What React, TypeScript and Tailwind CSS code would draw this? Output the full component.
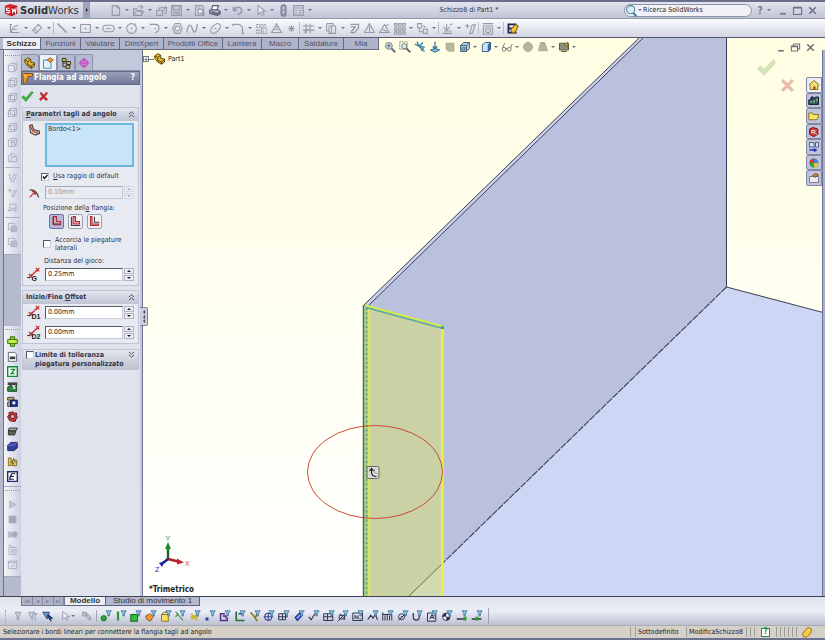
import React, { useState } from "react";
import type { ReactNode } from "react";

function Svg({ children, size = "w-[13px] h-[13px]", color = "text-[#9599a9]" }: { children: ReactNode; size?: string; color?: string }) {
  return (
    <svg viewBox="0 0 16 16" className={`${size} ${color} shrink-0`} fill="none" stroke="currentColor" strokeWidth="1.3" aria-hidden="true">
      {children}
    </svg>
  );
}

/* ---------- glyph drawings, all on a 16 x 16 grid ---------- */

const fileGlyphs: Record<string, ReactNode> = {
  nuovo: <path d="M4 2h6l3 3v9H4zM10 2v3h3" />,
  apri: <path d="M2 14V6h4l1 2h5v6zM2 14l3-5h9l-2 5M8 4c2-3 4-2 5 1M13 2v3h-3" />,
  pubblica: <path d="M2 14V8h7v6zM5 8V5h4M7 4h7v7h-4M9 9l5-6" />,
  salva: (
    <>
      <path d="M2 2h12v12H2z" fill="#c5c8d6" />
      <path d="M4 2v5h8V2M5 14v-4h6v4M9 11v3" />
    </>
  ),
  anteprima: (
    <>
      <path d="M3 2h8l2 2v10H3zM5 5h4" />
      <circle cx="9" cy="9" r="3" fill="#e6e8f0" />
      <path d="M11 11l3 3" strokeWidth="2" />
    </>
  ),
  stampa: (
    <>
      <path d="M4 7l2-5h7l-2 5" fill="#fff" stroke="#555a6e" />
      <path d="M2 8l2-1h8l3 2v3l-3 2-9-2-1-1z" fill="#a8adbd" stroke="#555a6e" />
      <path d="M4 10l8 2 2-2" stroke="#444a5c" />
    </>
  ),
  annulla: <path d="M3 3v5h5M3 8c3-5 9-5 10-1 1 3-2 5-5 6" strokeWidth="1.8" />,
  selezione: <path d="M5 2v11l3-3 2 4 2-1-2-4h4z" fill="#eef0f6" />,
  ricostruisci: (
    <>
      <rect x="5" y="1" width="6" height="14" rx="3" fill="#9da1b1" stroke="#757a8c" />
      <circle cx="8" cy="5" r="1" fill="#eee" stroke="none" />
      <circle cx="8" cy="10" r="1" fill="#eee" stroke="none" />
    </>
  ),
  opzioni: <path d="M2 2h12v12H2zM2 5h12M4 8h2M8 8h4M4 11h2M8 11h4" />,
};

const sketchGlyphs: Record<string, ReactNode> = {
  schizzo: <path d="M2 3h3M3 3v10h11M4 12c1-5 5-8 9-8M6 9h5" />,
  quota: <path d="M2 10l7-7 4 4-7 7zM4 8l4 4M9 3l4 4" />,
  linea: <path d="M2 2l11 11" strokeWidth="1.8" />,
  rettangolo: <path d="M2 3h12v10H2zM8 7v2M7 8h2" />,
  asola: <path d="M5 4h6a4 4 0 010 8H5a4 4 0 010-8zM5 8h6" />,
  cerchio: <path d="M8 2a6 6 0 100 12A6 6 0 008 2zM7 8h2M8 7v2M13 2l-2 2" />,
  arco: <path d="M3 3h6c6 0 6 8 0 10M3 2v2M8 8h2" strokeWidth="1.5" />,
  poligono: <path d="M5 2h6l3 6-3 6H5L2 8zM8 5a3 3 0 100 6 3 3 0 000-6z" />,
  spline: <path d="M1 13C3 0 6 3 8 9s5 4 6-7" strokeWidth="1.6" />,
  ellisse: <path d="M3 13C-1 9 9-1 13 3s-6 14-10 10zM7 8h2" />,
  raccordo: <path d="M2 3h5c4 0 6 3 6 6v5M1 2v3M12 14h3" strokeWidth="1.5" />,
  piano: <path d="M2 3h4v4H2zM8 3h6M2 10h4v4H2zM8 7h6v7H8zM6 5h8M10 7v7" strokeDasharray="2 1" />,
  testo: <path d="M2 13L8 2l6 11zM5 9h6M7 6h3" />,
  punto: <path d="M8 4v8M4 8h8M5 5l6 6M11 5l-6 6" />,
  taglia: <path d="M1 5h14M1 10h14M5 2v12M10 2v12M3 13l4-5" />,
  converti: <path d="M5 5h8v9H5zM2 2h8v3M2 2v9h3M8 5v9" />,
  offset: <path d="M3 3h10v4l-5 6H3M3 6h6l-5 6" strokeWidth="1.5" />,
  specchia: <path d="M8 5v7M2 13L8 2l6 11zM5 13h6" />,
  simmetria: <path d="M2 13L8 3l6 10zM9 5l4-2M6 9l5 3" />,
  ripeti: <path d="M2 2h3v3H2zM7 2h3v3H7zM12 2h3v3h-3zM2 7h3v3H2zM7 7h3v3H7zM12 7h3v3h-3zM2 12h3v3H2zM7 12h3v3H7zM12 12h3v3h-3z" />,
  sposta: <path d="M2 2h5v5H2zM9 9h5v5H9zM4 7v5h5M9 4l3 3" />,
  relazioni: <path d="M2 14h12M4 11h9M7 2v9M3 6l4 4 4-4M11 4l3-2" />,
  ripara: <path d="M4 2v6M1 5h6M7 14l3-10 4-1-4 11z" />,
  snap: <path d="M2 2h13M3 5h11v10H3zM8.500 7a3 3 0 100 6 3 3 0 000-6zM8 10h1" />,
  rapido: (
    <>
      <path d="M13 3H3v10h10M3 8h5" stroke="#20264f" strokeWidth="2.2" />
      <path d="M6 9l6-6 3 2-4 8-3 1z" fill="#f4c63a" stroke="#8a6412" />
    </>
  ),
};

type Entry = string | "|";

/* A name ending in "+" carries a drop-down arrow; "|" is a separator. */
const fileBar: Entry[] = ["nuovo+", "apri+", "pubblica", "salva+", "anteprima", "stampa+", "annulla+", "selezione+", "ricostruisci", "opzioni+"];
const sketchBar: Entry[] = [
  "schizzo+", "quota+", "|", "linea+", "rettangolo+", "asola+", "cerchio+", "arco+", "poligono", "spline+", "ellisse+", "raccordo+",
  "piano", "testo", "punto", "|", "taglia+", "converti+", "offset", "specchia", "simmetria", "ripeti+", "sposta+", "|",
  "relazioni+", "ripara", "|", "snap+", "|", "rapido",
];

function Arrow() {
  return <span className="w-0 h-0 border-x-2 border-x-transparent border-t-2 border-t-[#6d7185]" />;
}

function ToolRow({ entries, glyphs }: { entries: Entry[]; glyphs: Record<string, ReactNode> }) {
  return (
    <div className="flex h-full items-center">
      {entries.map((e, i) => {
        if (e === "|") return <span key={i} className="mr-px h-3 w-px shrink-0 bg-[#b9bccb]" />;
        const drop = e.endsWith("+");
        const name = drop ? e.slice(0, -1) : e;
        return (
          <button key={i} aria-label={name} className="flex shrink-0 items-center">
            <span className="flex w-[15px] justify-center">
              <Svg>{glyphs[name]}</Svg>
            </span>
            {drop && (
              <span className="flex w-2 justify-center">
                <Arrow />
              </span>
            )}
          </button>
        );
      })}
    </div>
  );
}

function PartIcon() {
  return (
    <Svg size="w-3 h-3">
      <path d="M1 4l4-3 4 2v4l5 1v4l-4 3-5-3-4-5z" fill="#e9b93a" stroke="#5a430c" />
      <path d="M1 4l4 2 4-3M5 6v4l5 2 4-3M10 12v3" stroke="#5a430c" />
    </Svg>
  );
}

const cubeBase = "M2 5h9v9H2zM5 2h9v9h-3M2 5l3-3M11 5l3-3M11 14l3-3";
const viewGlyphs: ReactNode[] = [
  <path d={cubeBase} />,
  <><path d={cubeBase} /><path d="M5 2v9h6M5 11l-3 3" /></>,
  <><path d={cubeBase} /><path d="M5 3v8h7" strokeWidth="1.8" /></>,
  <><path d={cubeBase} /><path d="M2 5v9M5 2v9h9" /></>,
  <><path d={cubeBase} /><path d="M5 5v6h6" /></>,
  <><path d={cubeBase} /><path d="M5 8h6M7 5v8" /></>,
  <path d="M2 14V6l4-4h4l4 5v7zM6 2v5h8M5 14c0-5 3-7 6-7" />,
];
const viewGlyphs2: ReactNode[] = [
  <path d="M3 4l3 10h3l5-9-4-1-3 7M3 4h3" />,
  <path d="M4 2v6M1 5h6M7 14l3-8 4-1-4 9z" />,
  <path d="M4 3h9v6H4zM2 12h12M4 10l-2 2 2 2M12 10l2 2-2 2" />,
];
const viewGlyphs3: ReactNode[] = [
  <><path d="M2 2h9v9H2z" /><path d="M6 6h8v8H6z" fill="#bfc3d0" /><path d="M8 8h4v4H8z" /></>,
  <><path d="M2 2h9v9H2z" /><path d="M6 6h8v8H6z" fill="#bfc3d0" /><path d="M8 12l5-5" /></>,
];
const macroGlyphs: ReactNode[] = [
  <><path d="M5 1h6v14H5z" fill="#7bdc22" stroke="#356b10" /><path d="M1 5h14v6H1z" fill="#a5ee3a" stroke="#356b10" /><path d="M5 6h6v4H5z" fill="#d9ee4d" stroke="none" /></>,
  <><path d="M2 2h9l3 3v10H2z" fill="#fff" stroke="#555b70" /><path d="M4 8h8v4H4z" fill="#3b4150" stroke="none" /></>,
  <><path d="M1 1h14v14H1z" fill="#f2fff4" stroke="#138a3a" strokeWidth="2" /><path d="M5 5h6l-5 6h5" stroke="#138a3a" strokeWidth="1.8" /></>,
  <><path d="M1 2h14v4H1z" fill="#444" stroke="none" /><path d="M1 15V9l5-3 3 5 5-5v9z" fill="#2d8a3a" stroke="#153d1b" /><path d="M8 12l3-4 2 3z" fill="#dfe8df" stroke="none" /></>,
  <><path d="M1 2h9v4H1zM1 9h5v6H1z" fill="#c9bd6a" stroke="#333" /><path d="M5 6h10v9H5z" fill="#1c2f9c" stroke="#0c1340" /><path d="M8 8h4v4H8z" fill="#fff" stroke="none" /></>,
  <><path d="M8 1l3 2 3 0 0 4 1 2-2 3-1 3H8l-4-1-2-3-1-3 2-3 0-3h3z" fill="#c43a3a" stroke="#5a1414" /><circle cx="8" cy="8" r="3" fill="#e8b9b9" stroke="#5a1414" /></>,
  <><path d="M3 3h12l-2 4H2z" fill="#a9aea5" stroke="#2b2f2a" /><path d="M2 7h11l-2 6H2z" fill="#5d655a" stroke="#2b2f2a" /></>,
  <><path d="M1 6l5-4h9v8l-5 4H1z" fill="#363e9c" stroke="#1f2566" /><path d="M1 6h9l5-4" stroke="#7c84dd" /></>,
  <><path d="M2 3h4v11H2zM8 6h6v8H8z" fill="#f2d43a" stroke="#7a661a" /><path d="M5 8l6 4M9 3l3 7" stroke="#555" /></>,
  <><path d="M1 1h14v14H1z" fill="#fff" stroke="#1d2a6b" strokeWidth="2" /><path d="M12 4H7L5 8h5M5 8l-1 4h6" stroke="#14193f" strokeWidth="1.8" /></>,
];
const playGlyphs: ReactNode[] = [
  <path d="M4 3l9 5-9 5z" fill="#c3c7d3" />,
  <path d="M3 3h10v10H3z" fill="#a3a7b6" />,
  <><path d="M2 4h1v8H2zM5 4h1v8H5z" /><circle cx="11" cy="8" r="4" fill="#a3a7b6" /></>,
  <path d="M3 5h10v10H3zM2 2h4l2 3M7 8h3v4H7z" />,
  <path d="M2 3h12v11H2zM2 5h12M5 12l6-5" />,
];

function Grip() {
  return <div className="mx-px h-0 border-t border-dotted border-[#8e92a6]" />;
}

function VList({ items }: { items: ReactNode[] }) {
  return (
    <>
      {items.map((g, i) => (
        <button key={i} aria-label={`Strumento ${i + 1}`} className="flex h-[15px] w-full shrink-0 items-center justify-center">
          <Svg size="w-[11px] h-[11px]" color="text-[#a9adbd]">{g}</Svg>
        </button>
      ))}
    </>
  );
}

function SideBar() {
  const box = "flex flex-col border-b border-[#a7abbd] bg-linear-to-r from-[#f4f5fa] to-[#ccd0e0]";
  return (
    <aside className="flex w-[17px] shrink-0 flex-col bg-[#b5bacd]">
      <div className={`${box} pt-[5px] pb-1`}>
        <Grip />
        <div className="pt-1"><VList items={viewGlyphs} /></div>
        <div className="mx-px my-[2px] h-px bg-[#b0b4c4]" />
        <VList items={viewGlyphs2} />
        <div className="mx-px my-[2px] h-px bg-[#b0b4c4]" />
        <VList items={viewGlyphs3} />
      </div>
      <div className="min-h-0 grow basis-0" />
      <div className={`${box} pt-[3px] pb-[2px]`}>
        <Grip />
        <div className="pt-1"><VList items={macroGlyphs} /></div>
      </div>
      <div className={`${box} pt-[3px] pb-1`}>
        <Grip />
        <div className="pt-[6px]"><VList items={playGlyphs} /></div>
      </div>
      <div className="h-[19px] shrink-0" />
    </aside>
  );
}

/* ---------- property manager ---------- */

function Chevrons({ down = false }: { down?: boolean }) {
  return (
    <svg viewBox="0 0 8 8" className="h-[7px] w-[7px] shrink-0" fill="none" stroke="#4c5168" strokeWidth="1.1" aria-hidden="true">
      <path d={down ? "M1 1l3 2.500L7 1M1 4.500L4 7l3-2.500" : "M1 3.500L4 1l3 2.500M1 7l3-2.500L7 7"} />
    </svg>
  );
}

function Spin({ id, label, value, disabled = false }: { id: string; label: string; value: string; disabled?: boolean }) {
  const [v, setV] = useState(value);
  return (
    <div className="flex h-[13px] grow items-stretch">
      <input
        id={id}
        aria-label={label}
        disabled={disabled}
        value={v}
        onChange={(e) => setV(e.target.value)}
        className={`w-0 grow border border-r-[#c8cbd6] border-b-[#c8cbd6] px-[2px] text-[7px] leading-[11px] outline-none ${disabled ? "border-t-[#a5a9b8] border-l-[#a5a9b8] bg-[#e9ebf2] text-[#9397a6]" : "border-t-[#555a6c] border-l-[#555a6c] bg-white text-[#222]"}`}
      />
      <div className={`ml-px flex w-[10px] flex-col ${disabled ? "opacity-30" : ""}`}>
        <button disabled={disabled} aria-label={`${label} più`} className="flex h-[6px] items-center justify-center border border-[#b1b4c2] bg-[#eceef4]">
          <span className="h-0 w-0 border-x-2 border-b-2 border-x-transparent border-b-[#222]" />
        </button>
        <button disabled={disabled} aria-label={`${label} meno`} className="mt-px flex h-[6px] items-center justify-center border border-[#b1b4c2] bg-[#eceef4]">
          <span className="h-0 w-0 border-x-2 border-t-2 border-x-transparent border-t-[#222]" />
        </button>
      </div>
    </div>
  );
}

function Tick({ id, checked = false }: { id: string; checked?: boolean }) {
  const [on, setOn] = useState(checked);
  return (
    <span className="relative h-2 w-2 shrink-0">
      <input
        id={id}
        type="checkbox"
        checked={on}
        onChange={() => setOn(!on)}
        className="block h-2 w-2 appearance-none border border-t-[#555a6c] border-l-[#555a6c] border-r-[#c8cbd6] border-b-[#c8cbd6] bg-white"
      />
      {on && (
        <svg viewBox="0 0 8 8" className="pointer-events-none absolute inset-0 h-2 w-2" fill="none" stroke="#111" strokeWidth="1.4" aria-hidden="true">
          <path d="M2 3.500L3.500 5.500 6.500 2" />
        </svg>
      )}
    </span>
  );
}

const groupHead = "flex items-center justify-between bg-linear-to-b from-[#e4e6ef] to-[#bfc3d2] px-[3px] text-[7px] font-bold text-[#2f3448]";
const groupBox = "mx-px border border-[#c0c4d2] bg-[#e8eaf1]";
const iconCol = "flex w-[22px] shrink-0 justify-center";

function GapIcon({ tag }: { tag: string }) {
  return (
    <svg viewBox="0 0 16 16" className="h-[14px] w-[14px] overflow-visible" fill="none" aria-hidden="true">
      <path d="M5 10L12 3" stroke="#c52b2b" strokeWidth="1.6" />
      <path d="M10 1l4 4M11 5l3-4M2 8l5 5M2 13l4-5" stroke="#c52b2b" strokeWidth="1.3" />
      <path d="M0 12h4" stroke="#333" />
      <text x="5" y="16" fontSize="8" fontWeight="bold" fill="#222" fontFamily="Liberation Sans, sans-serif">{tag}</text>
    </svg>
  );
}

const positions = [
  { id: "interna", label: "Materiale interno", d: "M4 2v9h9", fill: "M4 2h4v6h5v4H4z" },
  { id: "esterna", label: "Materiale esterno", d: "M3 2v11h11", fill: "M5 2h3v6h5v3H5z" },
  { id: "piega", label: "Piega all'esterno", d: "M8 2v7h6", fill: "M3 2h2v9h8v2H3z" },
];

function PropertyPanel() {
  const [pos, setPos] = useState("interna");
  const tabs: { n: string; g: ReactNode }[] = [
    { n: "Albero", g: <PartIcon /> },
    { n: "Proprietà", g: <Svg size="w-3 h-3"><path d="M2 4h10v11H2z" fill="#dff2fa" stroke="#3b8fb5" /><path d="M7 4l4-3 4 3-4 3z" fill="#f2a53a" stroke="#8d5512" /></Svg> },
    { n: "Configurazioni", g: <Svg size="w-3 h-3"><path d="M3 2h5v4H3zM9 6h5v4H9zM8 11h5v4H8z" fill="#d8c34a" stroke="#333" /><path d="M4 6v7h4M4 8h5" stroke="#333" /></Svg> },
    { n: "DimXpert", g: <Svg size="w-3 h-3"><circle cx="8" cy="8" r="4.500" stroke="#c94bc6" strokeWidth="2" /><path d="M8 1v14M1 8h14" stroke="#c94bc6" strokeWidth="1.800" /></Svg> },
  ];
  return (
    <section className="relative flex w-[119px] shrink-0 flex-col bg-[#dfe3ed] text-[7px] text-[#2c3042]">
      <div className="flex h-[21px] items-end border-b border-[#8d92aa] bg-[#c3c8da] pt-1">
        {tabs.map((t, i) => (
          <button key={t.n} aria-label={t.n} className={`flex h-4 w-[18px] items-center justify-center rounded-t-xs border border-b-0 border-[#8d92aa] ${i === 1 ? "bg-[#eef0f7]" : "bg-[#b5bacf]"}`}>
            {t.g}
          </button>
        ))}
      </div>
      <h1 className="flex h-[14px] items-center border border-[#646a88] bg-linear-to-b from-[#9ba0b8] to-[#71779a] text-[8px] font-bold text-white">
        <Svg size="w-3 h-3"><path d="M1 2h13v4H8L5 15H2z" fill="#f09a2a" stroke="#8c520b" /><path d="M2 3l4 4" stroke="#fbe3b8" /></Svg>
        <span className="grow">Flangia ad angolo</span>
        <button aria-label="Guida" className="px-1">?</button>
      </h1>
      <div className="flex h-[22px] items-center gap-1">
        <button aria-label="OK"><Svg><path d="M1 9l2-2 3 3 7-8 2 1-9 11z" fill="#45b83f" stroke="#1d7d22" strokeWidth="0.800" /></Svg></button>
        <button aria-label="Annulla"><Svg size="w-[11px] h-[11px]"><path d="M3 3l2-1 3 4 4-4 2 1-4 5 4 4-2 2-4-4-4 4-2-2 4-4z" fill="#d3232c" stroke="#8d1218" strokeWidth="0.800" /></Svg></button>
      </div>

      <div className={groupBox}>
        <h2 className={`${groupHead} h-[13px]`}><span><u>P</u>arametri tagli ad angolo</span><Chevrons /></h2>
        <div className="flex flex-col pr-1 pb-1">
          <div className="flex pt-[2px]">
            <span className={iconCol}><Svg><path d="M2 3l3-1 2 6 7 2v3l-5 2-6-3z" fill="#cfc4b4" stroke="#4d3b33" /><path d="M3 4l3 6 7 3" stroke="#b8332d" /></Svg></span>
            <ul aria-label="Bordi selezionati" className="h-[44px] grow border-2 border-[#6db7e3] bg-[#c8e5f7] px-px leading-[8px]"><li>Bordo&lt;1&gt;</li></ul>
          </div>
          <div className="flex h-[19px] items-center gap-1 pl-[18px]">
            <Tick id="raggio" checked />
            <label htmlFor="raggio"><u>U</u>sa raggio di default</label>
          </div>
          <div className="flex items-center">
            <span className={iconCol}><Svg><path d="M2 5c6-1 9 2 11 9" stroke="#444" strokeWidth="1.500" /><path d="M2 14l7-7M9 7v4M9 7H5" stroke="#c52b2b" strokeWidth="1.500" /></Svg></span>
            <Spin id="raggio-val" label="Raggio" value="0.10mm" disabled />
          </div>
          <fieldset>
            <legend className="pt-[4px] pl-[20px] leading-[11px]">Posizione dell<u>a</u> flangia:</legend>
            <div className="flex h-[15px] gap-1 pl-[26px]">
              {positions.map((p) => (
                <label key={p.id} className={`flex h-[15px] w-[15px] items-center justify-center rounded-xs border ${pos === p.id ? "border-[#6d6fa5] bg-[#b8b6de]" : "border-[#9a9eae] bg-[#f3f3f6]"}`}>
                  <input type="radio" name="posizione" aria-label={p.label} checked={pos === p.id} onChange={() => setPos(p.id)} className="sr-only" />
                  <Svg size="w-[13px] h-[13px]">
                    <path d={p.fill} fill="#dfa3a8" stroke="#b02a33" />
                    <path d={p.d} stroke="#3c3c46" />
                  </Svg>
                </label>
              ))}
            </div>
          </fieldset>
          <div className="flex items-center gap-1 pt-[7px] pb-[3px] pl-[20px]">
            <Tick id="accorcia" />
            <label htmlFor="accorcia" className="leading-[8px]">Accorcia le piegature laterali</label>
          </div>
          <label htmlFor="gioco" className="pl-[21px] leading-[12px]">Distanza del gioco:</label>
          <div className="flex items-center">
            <span className={iconCol}><GapIcon tag="G" /></span>
            <Spin id="gioco" label="Distanza del gioco" value="0.25mm" />
          </div>
        </div>
      </div>

      <div className={`${groupBox} mt-1`}>
        <h2 className={`${groupHead} h-[13px]`}><span>Inizio/Fine <u>O</u>ffset</span><Chevrons /></h2>
        <div className="flex flex-col gap-[6px] pt-px pr-1 pb-1">
          <div className="flex items-center"><span className={iconCol}><GapIcon tag="D1" /></span><Spin id="d1" label="Offset iniziale" value="0.00mm" /></div>
          <div className="flex items-center"><span className={iconCol}><GapIcon tag="D2" /></span><Spin id="d2" label="Offset finale" value="0.00mm" /></div>
        </div>
      </div>

      <div className={`${groupBox} mt-[5px]`}>
        <div className={`${groupHead} h-[19px] items-start pt-px`}>
          <Tick id="limite" />
          <label htmlFor="limite" className="grow pl-px leading-[9px]">Limite di tolleranza<br />piegatura personalizzato</label>
          <Chevrons down />
        </div>
      </div>
    </section>
  );
}

/* ---------- model view ---------- */

function Scene() {
  return (
    <svg viewBox="0 38 825 558" preserveAspectRatio="xMinYMin slice" className="absolute inset-0 h-full w-full" aria-hidden="true">
      <defs>
        <linearGradient id="sky" x1="0" y1="0" x2="0" y2="1">
          <stop offset="0" stopColor="#fffde2" />
          <stop offset="0.500" stopColor="#fffff2" />
          <stop offset="1" stopColor="#ffffff" />
        </linearGradient>
      </defs>
      <rect x="0" y="38" width="825" height="558" fill="url(#sky)" />
      <path d="M639 38H727V287L409 596H364V305Z" fill="#b9c1df" />
      <path d="M727 287L825 313V596H409Z" fill="#cdd6f4" />
      <path d="M639 38L364 305L368 306L643 38Z" fill="#ccd2ea" />
      <path d="M639 38L364 305M643 38L368 306" stroke="#3d4058" strokeWidth="1" />
      <path d="M726.500 38V287L825 313" stroke="#3b3f50" strokeWidth="1" fill="none" />
      <path d="M726.500 287L409 596" stroke="#3a3e52" strokeWidth="1.100" strokeDasharray="7 1" />
      <path d="M364 305L443 328V596H364Z" fill="#c9d1a5" />
      <path d="M443 563V596H409Z" fill="#d3dab1" />
      <path d="M443 563L409 596" stroke="#6a6f52" />
      <path d="M363.500 305V596" stroke="#4a6b50" strokeWidth="1.500" />
      <path d="M366.500 307V596" stroke="#a7dc62" strokeWidth="3" />
      <path d="M366.500 308V596" stroke="#4a9c8c" strokeWidth="1.400" strokeDasharray="2 2.500" />
      <path d="M369 308V596" stroke="#e9ee36" strokeWidth="1.300" />
      <path d="M442.500 328V596" stroke="#eef03a" strokeWidth="2.500" />
      <path d="M366 305.500L443 326.500" stroke="#d3ea4a" strokeWidth="2" />
      <path d="M366 307.500L443 328.500" stroke="#58a8a0" strokeWidth="1.600" />
      <path d="M441 326h3v3h-3z" fill="#4d9f95" />
      <ellipse cx="375" cy="472" rx="67.500" ry="46.500" fill="none" stroke="#cf4a35" strokeWidth="1" />
      <rect x="367" y="466.500" width="12" height="12" rx="1.500" fill="#d9dbd6" stroke="#63666a" />
      <path d="M371.500 469v3c0 3 1.500 4.500 5 4.500M369.500 471l2-2.500 2 2.500" fill="none" stroke="#222" strokeWidth="1.200" />
      <path d="M374.500 469v2c0 2 1 2.500 3 2.500" fill="none" stroke="#8a8d8a" strokeWidth="0.800" />
      {/* axis triad */}
      <path d="M168 559V548" stroke="#166b22" strokeWidth="2.400" />
      <path d="M165 549l3-7 3 7z" fill="#1a8a2c" />
      <path d="M168 559l10 2.500" stroke="#b01f24" strokeWidth="2.400" />
      <path d="M177 558.500l7 4-7 2z" fill="#c4252b" />
      <path d="M168 559l-5 4" stroke="#1a1d8a" strokeWidth="2.400" />
      <path d="M165 561l-6 2 3 4z" fill="#1b1fa5" />
      <g fontSize="7" fontFamily="Liberation Sans, sans-serif">
        <text x="165.500" y="541" fill="#2c8f3c">Y</text>
        <text x="185" y="566" fill="#c4454a">X</text>
        <text x="155" y="572" fill="#20248f">Z</text>
      </g>
    </svg>
  );
}

const hud: { d: ReactNode; drop?: boolean }[] = [
  { d: <><circle cx="6.500" cy="6.500" r="4.500" fill="#dbe8ee" stroke="#6e7c84" /><path d="M10 10l5 5" stroke="#5d6a72" strokeWidth="2.400" /><path d="M4 6.500h5M6.500 4v5" stroke="#50606a" /></> },
  { d: <><path d="M1 1h10v10H1z" stroke="#888" strokeDasharray="2 1" /><circle cx="7" cy="7" r="3.500" fill="#dbe8ee" stroke="#6e7c84" /><path d="M10 10l5 5" stroke="#5d6a72" strokeWidth="2.400" /></> },
  { d: <><path d="M1 4l6 3 5-5M4 1l3 6 7 7" stroke="#2f7ba5" strokeWidth="1.800" /><path d="M9 7l5 1-4 5z" fill="#79bfe0" stroke="#2f7ba5" /></> },
  { d: <><path d="M8 1v10M5 7l3 4 3-4" stroke="#25688f" strokeWidth="1.600" /><path d="M2 12l6-2 6 2-6 3z" fill="#8cc4de" stroke="#25688f" /></> },
  { d: <path d="M3 3h10v11l-3-1-3 1-4-3z" fill="#b7b8a0" stroke="#a5a68f" /> },
  { d: <><path d="M2 6l4-4h8v8l-4 4H2z" fill="#a9cbe0" stroke="#4b6577" /><path d="M2 6h8v8M10 6l4-4M4 9h4v3H4z" stroke="#4b6577" /></>, drop: true },
  { d: <><path d="M3 5l4-3h7v9l-3 3H3z" fill="#c9e5f7" stroke="#36618e" /><path d="M11 5l3-3v9l-3 3z" fill="#2f6ec4" stroke="#36618e" /></>, drop: true },
  { d: <><circle cx="4" cy="11" r="2.500" stroke="#777" /><circle cx="11" cy="11" r="2.500" stroke="#777" /><path d="M6 10h3M2 9l3-6M13 9l2-5" stroke="#777" /></>, drop: true },
  { d: <circle cx="8" cy="8" r="6" fill="#b3b59a" stroke="#a7a88e" /> },
  { d: <path d="M5 2h5l4 11H2z" fill="#b3b59a" stroke="#a7a88e" />, drop: true },
  { d: <><path d="M2 3h12v9H2z" fill="#8b8f80" stroke="#55584d" /><path d="M4 14h8M8 5l5-3v6z" fill="#e3b93a" stroke="#776019" /></>, drop: true },
];

const taskTabs: ReactNode[] = [
  <><path d="M1 8l7-6 7 6M3 8v6h10V8" fill="#f3df72" stroke="#8a6f1a" /><path d="M7 10h3v4H7z" fill="#8d4d1a" stroke="none" /></>,
  <><path d="M1 14V8l3-1v-3h3v3l3-3h4v10z" fill="#28566d" stroke="#15222b" /><path d="M4 9v3M8 8v4M12 6v4" stroke="#d6dd55" /></>,
  <path d="M1 13V4h5l1 2h7v2l-2 5z" fill="#f4df70" stroke="#927719" />,
  <><path d="M2 4l5-2 6 2v8l-6 2-5-3z" fill="#d13b3b" stroke="#7a1616" /><path d="M5 6h4v3H5zM10 10l4 4" stroke="#eee" /></>,
  <><path d="M2 2h6v6H2zM10 2h4v6h-4z" fill="#dce6f5" stroke="#4a5a80" /><path d="M2 12h8M8 10l3 2-3 2" stroke="#2233bb" strokeWidth="1.800" /></>,
  <><circle cx="8" cy="8" r="6" fill="#3c82d6" stroke="none" /><path d="M8 8V2a6 6 0 00-6 6z" fill="#d33b2e" stroke="none" /><path d="M8 8H2a6 6 0 006 6z" fill="#3ba33b" stroke="none" /><path d="M8 8h6a6 6 0 01-6 6z" fill="#e9c33b" stroke="none" /></>,
  <><path d="M2 6h12v8H2z" fill="#e9eaf0" stroke="#7b7f90" /><path d="M6 5l4-3 4 2-4 3z" fill="#c98e4a" stroke="#6d4a1c" /></>,
];

function WindowKeys({ restore = false }: { restore?: boolean }) {
  return (
    <div className="flex items-center gap-[2px]">
      <button aria-label="Riduci"><Svg color="text-[#6e7183]"><path d="M5 12h7" strokeWidth="2" /></Svg></button>
      <button aria-label="Ingrandisci">
        <Svg size={restore ? "w-[11px] h-[11px] mx-px" : "w-[13px] h-[13px]"} color="text-[#6e7183]">{restore ? <path d="M5 3h9v7h-3M5 3v3M2 6h9v7H2zM2 7h9" strokeWidth="1.600" /> : <path d="M3 4h10v9H3zM3 5h10" />}</Svg>
      </button>
      <button aria-label="Chiudi"><Svg color="text-[#6e7183]"><path d="M4 4l8 8M12 4l-8 8" strokeWidth="2" /></Svg></button>
    </div>
  );
}

function Viewport() {
  return (
    <main className="relative flex min-w-0 grow flex-col justify-between">
      <div className="flex h-[18px] items-center text-[7px] text-[#222]">
        <button aria-label="Espandi" className="flex h-[6px] w-[6px] items-center justify-center border border-[#777] bg-white text-[6px] leading-none">+</button>
        <span className="h-px w-[5px] bg-[#777]" />
        <PartIcon />
        <span className="pl-[2px]">Part1</span>
      </div>
      <p className="pb-px pl-[6px] text-[8px] leading-[10px] font-bold text-[#222]">*Trimetrico</p>
    </main>
  );
}

/* ---------- selection filter bar ---------- */

const N = "#2b3350";
const filterGlyphs: ReactNode[] = [
  <circle cx="5" cy="11" r="3.500" fill="#2fae3e" stroke="#176323" />,
  <path d="M4 2v12" stroke="#23a035" strokeWidth="3" />,
  <path d="M1 6h9v9H1z" fill="#2fc03c" stroke="#176323" />,
  <path d="M1 8l6-3 4 4-4 6-5-3z" fill="#ef9a32" stroke="#9c5510" />,
  <path d="M2 6h9v9H2zM2 6l3-3h6" fill="#f6de62" stroke="#94741a" />,
  <path d="M2 2l10 12M2 9l4-4" stroke="#3a8a44" strokeWidth="1.500" />,
  <path d="M3 5l8 9M3 13l8-8M2 9h10" stroke="#c6b51f" strokeWidth="2" />,
  <path d="M2 10h4v4H2z" fill="#27429e" stroke="none" />,
  <path d="M8 5H2v9h9v-4M5 8h4v3" stroke="#5a2d85" strokeWidth="2" />,
  <><path d="M3 2v12h11" stroke="#23702f" strokeWidth="2.200" /><path d="M6 5h6" stroke="#27429e" strokeWidth="2" /></>,
  <path d="M2 3l6 7 3 5M8 10l4-6" stroke="#8d7d16" strokeWidth="2.200" />,
  <><circle cx="7" cy="9" r="5" stroke={N} /><path d="M1 9h12M7 4v10" stroke="#3248a5" strokeWidth="1.500" /></>,
  <path d="M1 5h9v8H1zM1 9h12M6 5v8" stroke={N} />,
  <path d="M3 10l6-6 3 3-6 7z" fill="#7fa6ee" stroke="#1e2e9a" strokeWidth="1.800" />,
  <path d="M1 9l3 4 6-9" stroke={N} strokeWidth="1.500" />,
  <path d="M1 5h12v9H1zM1 9h12M6 5v9" stroke={N} />,
  <path d="M3 7h7v5H3zM1 15l11-11M4 5l7 8" stroke={N} />,
  <path d="M1 4h13v10H1zM4 12V7l4 5V7M10 12h2" stroke={N} />,
  <path d="M1 13l4-6 3 4 3-5 3 7" stroke={N} strokeWidth="1.500" />,
  <path d="M1 3v11M4 7v7M7 5v9M10 8v6M13 6v8M1 6h12" stroke={N} />,
  <><circle cx="6" cy="9" r="4" stroke={N} /><path d="M2 14l9-9M5 9h3" stroke={N} /></>,
  <path d="M3 4v5c0 6 8 6 8 0V4" stroke={N} strokeWidth="1.600" />,
  <path d="M2 4h11v11H2zM5 12l3-6 3 6M6 10h4" stroke={N} />,
  <><circle cx="7" cy="9" r="5" fill="#fff" stroke={N} /><path d="M7 9V4a5 5 0 00-5 5zM7 9h5a5 5 0 01-5 5z" fill={N} stroke="none" /></>,
  <><path d="M1 12h12" stroke="#222" strokeWidth="1.800" /><path d="M10 9h4v5h-4z" fill="#2b9b39" stroke="none" /></>,
  <><path d="M1 12h13" stroke="#222" strokeWidth="1.800" /><path d="M6 9h4v5H6z" fill="#2b9b39" stroke="none" /></>,
];

function FilterBar() {
  const grey: ReactNode[] = [
    <path d="M4 3h8L9 8v5H7V8z" fill="#cfd2dd" />,
    <path d="M2 3h8L7 8v5L2 4M8 5h5l-3 4 2 5" fill="#cfd2dd" />,
    <><path d="M1 3h9L7 8v4L1 3" fill="#6f9bc9" stroke="#27507f" /><path d="M8 6l6 5h-3l1 4-4-6z" fill="#224a94" stroke="#142c5c" /></>,
  ];
  return (
    <div className="flex h-[19px] items-center pl-[5px]">
      <span className="mr-1 h-3 border-l border-dotted border-[#9296aa]" />
      {grey.map((g, i) => (
        <button key={i} aria-label={`Filtro ${i + 1}`} className="flex w-[15px] justify-center"><Svg size="w-3 h-3">{g}</Svg></button>
      ))}
      <button aria-label="Selezione" className="flex w-6 items-center justify-center"><Svg size="w-3 h-3">{fileGlyphs.selezione}</Svg><Arrow /></button>
      <button aria-label="Inverti selezione" className="flex w-[15px] justify-center"><Svg size="w-3 h-3"><path d="M2 3h5v5H2zM7 4l7 7-3 0 1 3-5-5z" fill="#c1c4d0" /></Svg></button>
      <span className="mx-[2px] h-3 w-px bg-[#9ea2b4]" />
      <div className="flex w-[385px] items-center">
        {filterGlyphs.map((g, i) => (
          <button key={i} aria-label={`Filtro di selezione ${i + 1}`} className="flex min-w-0 grow basis-0 justify-center">
            <Svg size="w-3 h-3">
              {g}
              <path d="M8 1h7l-2.500 4v3h-2V5z" fill="#8fc0e0" stroke="#2c5f8a" strokeWidth="0.900" />
            </Svg>
          </button>
        ))}
      </div>
      <span className="ml-1 h-4 w-px bg-[#9ea2b4]" />
    </div>
  );
}

const commandTabs = [
  { t: "Schizzo", w: "w-[38px]" },
  { t: "Funzioni", w: "w-[40px]" },
  { t: "Valutare", w: "w-[39px]" },
  { t: "DimXpert", w: "w-[44px]" },
  { t: "Prodotti Office", w: "w-[59px]" },
  { t: "Lamiera", w: "w-[39px]" },
  { t: "Macro", w: "w-[37px]" },
  { t: "Saldature", w: "w-[45px]" },
  { t: "Mia", w: "w-[35px]" },
];

function Ribs() {
  return (
    <span className="flex gap-[3px]">
      <i className="h-[10px] w-px bg-[#9c9b98]" />
      <i className="h-[10px] w-px bg-[#9c9b98]" />
      <i className="h-[10px] w-px bg-[#9c9b98]" />
    </span>
  );
}

export default function App() {
  const [tab, setTab] = useState("Schizzo");
  const [query, setQuery] = useState("Ricerca SolidWorks");
  return (
    <div className="flex h-screen flex-col overflow-hidden bg-[#dfe2ec] font-['DejaVu_Sans_Condensed','DejaVu_Sans',sans-serif]">
      <header className="flex h-[19px] shrink-0 items-center border-t-2 border-b border-t-[#6b6f8c] border-b-[#9195ad] bg-linear-to-b from-[#e2e4ee] to-[#c0c4d7]">
        <div className="flex h-full w-[83px] shrink-0 items-center gap-[2px] pl-1 text-[10px] text-[#333]">
          <svg viewBox="0 0 16 16" className="h-[14px] w-[14px] shrink-0" aria-hidden="true">
            <path d="M1 3l6-2 8 2v9l-7 3-7-3z" fill="#d5242c" />
            <path d="M8 5l7-2v9l-7 3z" fill="#a3141c" />
            <path d="M6 6H3v2.500h3V11H3M9 6l1 5 1.500-4L13 11l1-6" fill="none" stroke="#fff" strokeWidth="1.200" />
          </svg>
          <span className="font-['DejaVu_Sans',sans-serif]"><b>Solid</b>Works</span>
        </div>
        <button aria-label="Menu" className="mr-[18px] flex h-full w-[7px] items-center justify-center bg-[#9da2bd]">
          <span className="h-0 w-0 border-y-2 border-l-2 border-y-transparent border-l-[#222]" />
        </button>
        <ToolRow entries={fileBar} glyphs={fileGlyphs} />
        <span className="grow text-center text-[7px] text-[#333]">Schizzo8 di Part1 *</span>
        <div className="flex h-[13px] w-[128px] shrink-0 items-center rounded-full border border-[#8e93aa] bg-[#f1f2f8]">
          <Svg size="w-[13px] h-[13px]"><circle cx="7" cy="7" r="5" fill="#d3ecf6" stroke="#557f99" /><path d="M10 11l4 4" stroke="#3c7fa8" strokeWidth="2.600" /></Svg>
          <Arrow />
          <input aria-label="Ricerca" value={query} onChange={(e) => setQuery(e.target.value)} className="w-0 grow bg-transparent pl-px text-[7px] text-[#222] outline-none" />
        </div>
        <button aria-label="Guida" className="flex w-6 shrink-0 items-center justify-center gap-1 text-[10px] font-bold text-[#77798c]">?<Arrow /></button>
        <div className="pr-[6px]"><WindowKeys /></div>
      </header>

      <div className="h-[19px] shrink-0 border-b border-[#55596f] bg-linear-to-b from-[#fbfbfe] to-[#d3d6e3] pl-[7px]">
        <ToolRow entries={sketchBar} glyphs={sketchGlyphs} />
      </div>

      <div className="relative flex min-h-0 grow flex-col">
        <Scene />
        <div className="relative flex shrink-0 items-start">
          <nav className="flex h-3 border-b border-[#666b85] bg-[#b5bace] pl-[3px] font-['Liberation_Sans',Arial,sans-serif] text-[8px]">
            {commandTabs.map((c) => (
              <button
                key={c.t}
                onClick={() => setTab(c.t)}
                className={`${c.w} border-r border-[#666b85] text-center leading-[11px] whitespace-nowrap ${tab === c.t ? "bg-[#eef0f7] font-bold text-[#333]" : "bg-[#b0b4ca] text-[#4f5367]"}`}
              >
                {c.t}
              </button>
            ))}
          </nav>
          <div className="flex h-[18px] items-center pl-[3px]">
            {hud.map((h, i) => (
              <button key={i} aria-label={`Vista ${i + 1}`} className="flex items-center">
                <span className="flex w-[15px] justify-center"><Svg size="w-3 h-3">{h.d}</Svg></span>
                {h.drop && <span className="flex w-[6px] justify-center"><Arrow /></span>}
              </button>
            ))}
          </div>
          <div className="flex grow justify-end pt-[3px] pr-2"><WindowKeys restore /></div>
        </div>

        <div className="relative -mt-[6px] flex min-h-0 grow items-stretch">
          <div className="w-1 shrink-0 border-r border-[#6e7390] bg-[#b5bacd]" />
          <SideBar />
          <PropertyPanel />
          <div className="relative w-[3px] shrink-0 border-r border-[#6d7290] bg-[#c3c7d8]">
            <button aria-label="Comprimi pannello" className="absolute top-[257px] left-0 flex h-[19px] w-2 flex-col items-center justify-between rounded-r-xs border border-l-0 border-[#7b809c] bg-[#c9cddd] py-[2px]">
              <i className="h-0 w-0 border-y-2 border-r-2 border-y-transparent border-r-[#444]" />
              <i className="h-0 w-0 border-y-2 border-r-2 border-y-transparent border-r-[#444]" />
              <i className="h-0 w-0 border-y-2 border-r-2 border-y-transparent border-r-[#444]" />
            </button>
          </div>
          <Viewport />
          <div className="flex flex-col items-end">
            <div className="flex items-start pr-[26px]">
              <button aria-label="Conferma schizzo" className="pt-2 pr-[3px] opacity-30"><Svg size="w-[19px] h-[19px]"><path d="M1 9l2-2 3 3 8-8 1 2-9 10z" fill="#7ab35f" stroke="#6ba04f" /></Svg></button>
              <button aria-label="Annulla schizzo" className="pt-[27px] opacity-40"><Svg size="w-[17px] h-[17px]"><path d="M3 3l10 10M13 3L3 13" stroke="#c55a55" strokeWidth="3" /></Svg></button>
            </div>
            <div className="-mt-[17px] flex h-[109px] flex-col">
              {taskTabs.map((g, i) => (
                <button key={i} aria-label={`Riquadro attività ${i + 1}`} className={`flex w-4 grow basis-0 items-center justify-center rounded-l-xs border border-[#8287a5] ${i === 0 ? "bg-[#eceef6]" : "bg-[#bfc4da]"}`}>
                  <Svg size="w-3 h-3">{g}</Svg>
                </button>
              ))}
            </div>
          </div>
          <div className="w-[3px] shrink-0 border-l border-[#6d7290] bg-[#aab0c9]" />
        </div>
      </div>

      <footer className="shrink-0 border-t border-[#3f4358]">
        <div className="bg-linear-to-b from-[#dfe2ec] via-[#eceef7] to-[#bcc0d1]">
          <div className="flex h-[9px] items-stretch pl-[21px] font-['Liberation_Sans',Arial,sans-serif] text-[8px] leading-[8px]">
            <div className="flex w-[44px] border border-t-0 border-[#777c96] bg-[#aeb3c8]">
              {["|◂", "◂", "▸", "▸|"].map((s) => (
                <button key={s} className="flex-1 border-r border-[#8589a2] text-[6px] leading-[8px] text-[#777c96]">{s}</button>
              ))}
            </div>
            <button className="w-[41px] border-r border-b border-[#5e6380] bg-[#eceef6] font-bold whitespace-nowrap text-[#333]">Modello</button>
            <button className="w-[94px] border-r border-b border-[#5e6380] bg-[#b5b9cd] whitespace-nowrap text-[#333]">Studio di movimento 1</button>
          </div>
          <FilterBar />
        </div>
        <div className="flex h-[15px] items-center border-t border-b-2 border-t-[#a9abb3] border-b-[#6d7290] bg-[#d5d1c8] pr-1 pl-[3px] text-[7px] text-[#222]">
          <span className="grow">Selezionare i bordi lineari per connettere la flangia tagli ad angolo</span>
          <span className="mr-1 h-[10px] w-px bg-[#9c9b98]" />
          <span className="w-[51px] border-l border-[#9c9b98] pl-[2px]">Sottodefinito</span>
          <span className="w-[60px] border-l border-[#9c9b98] pl-[2px]">ModificaSchizzo8</span>
          <Ribs />
          <span className="mx-[6px] flex h-[9px] w-[9px] items-center justify-center border border-[#1c8d4a] bg-white text-[8px] leading-none font-bold text-[#1c8d4a]">?</span>
          <span className="flex gap-[3px]"><Ribs /><Ribs /></span>
          <Svg size="w-3 h-3 ml-1 mr-2"><path d="M2 10l7-8 5 2-1 6-6 5-4-1z" fill="#f3cb3c" stroke="#94701a" /><circle cx="11" cy="5" r="1" fill="#fff" stroke="none" /></Svg>
        </div>
      </footer>
    </div>
  );
}
